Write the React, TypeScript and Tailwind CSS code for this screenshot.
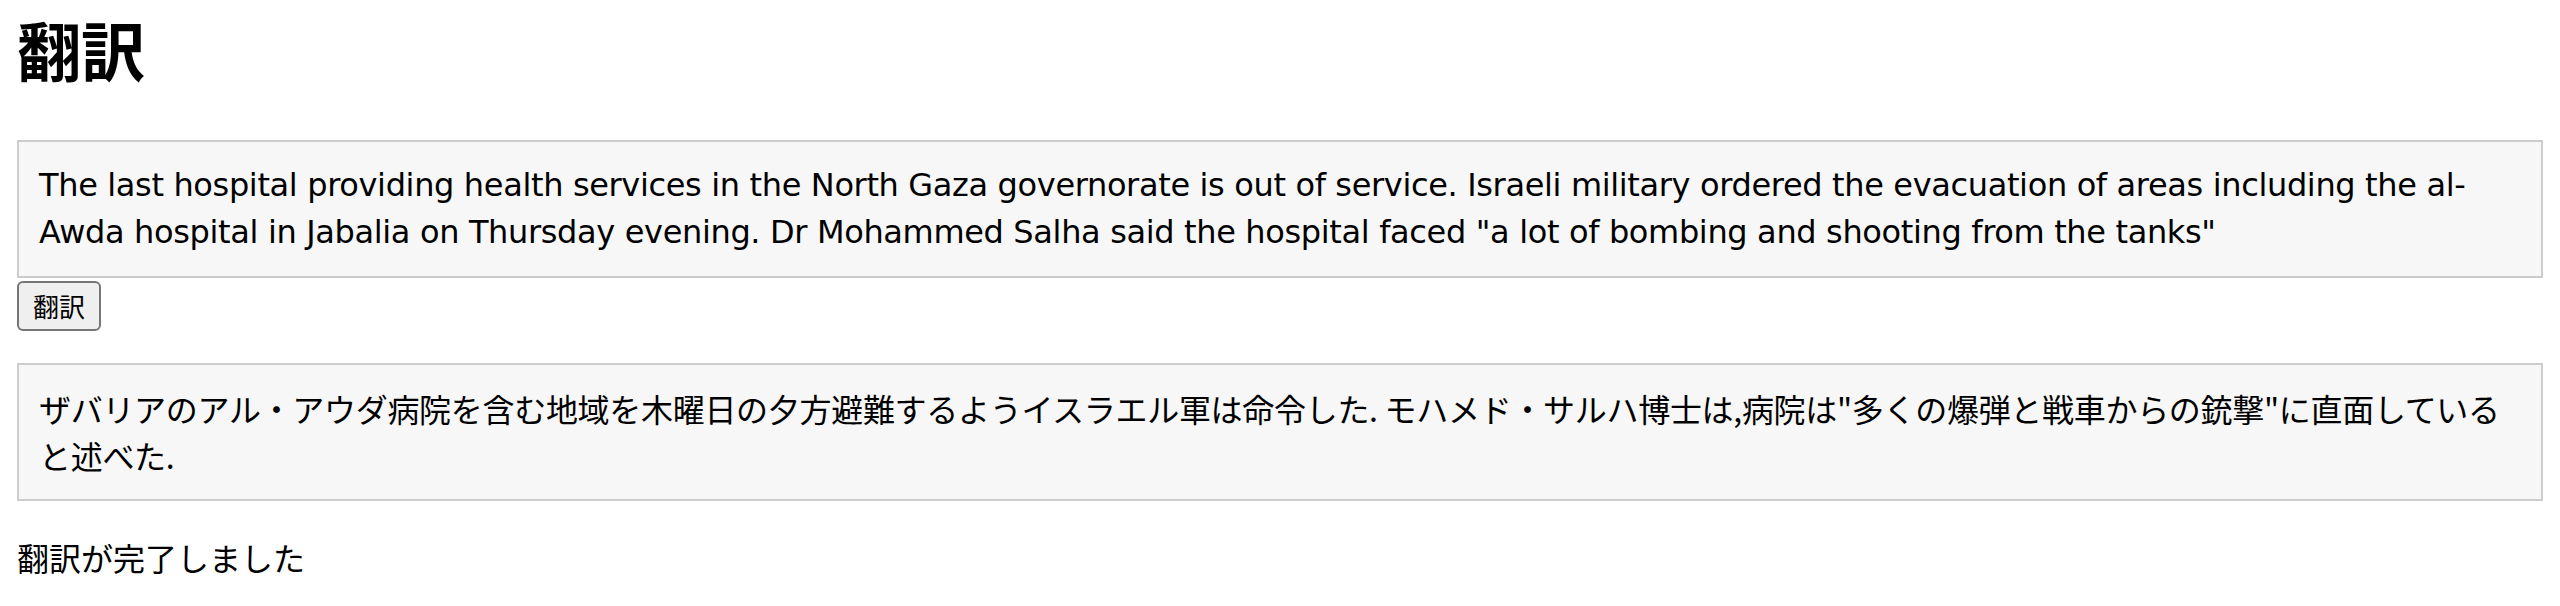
import React from 'react'

const source =
  'The last hospital providing health services in the North Gaza governorate is out of service. Israeli military ordered the evacuation of areas including the al-Awda hospital in Jabalia on Thursday evening. Dr Mohammed Salha said the hospital faced "a lot of bombing and shooting from the tanks"'

const translated =
  'ザバリアのアル・アウダ病院を含む地域を木曜日の夕方避難するようイスラエル軍は命令した. モハメド・サルハ博士は,病院は"多くの爆弾と戦車からの銃撃"に直面していると述べた.'

function TextBox({ children, className = '' }: { children: React.ReactNode; className?: string }) {
  return (
    <div
      className={`border-2 border-[#cccccc] bg-[#f7f7f7] px-[20px] py-[20px] text-[32px] leading-[47px] text-black ${className}`}
    >
      {children}
    </div>
  )
}

export default function App() {
  return (
    <div className="min-h-screen bg-white px-[17px] font-['Noto_Sans_CJK_JP',sans-serif] text-black">
      {/* Title */}
      <h1 className="mb-[44px] text-[64px] font-bold leading-[96px]">翻訳</h1>

      {/* Source text */}
      <TextBox className="font-['DejaVu_Sans','Noto_Sans_CJK_JP',sans-serif] tracking-[-0.35px]">{source}</TextBox>
      <button className="mt-[3px] flex h-[50px] w-[84px] items-center justify-center rounded-[6px] border-2 border-[#767676] bg-[#efefef] text-[26px] leading-none text-black">
        翻訳
      </button>

      {/* Result */}
      <div className="mt-[32px]">
        <TextBox className="tracking-[-0.3px]">{translated}</TextBox>
      </div>

      <p className="mt-[32px] text-[32px] leading-[48px]">翻訳が完了しました</p>
    </div>
  )
}
